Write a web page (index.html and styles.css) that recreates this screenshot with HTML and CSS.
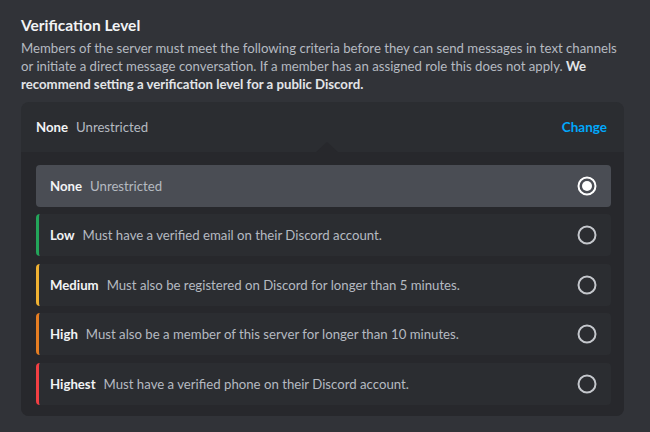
FILE: index.html
```html
<!DOCTYPE html>
<html lang="en">
<head>
<meta charset="utf-8">
<title>Verification Level</title>
<link rel="stylesheet" href="styles.css">
</head>
<body>
<main class="page">
  <h2 class="title">Verification Level</h2>
  <p class="desc">Members of the server must meet the following criteria before they can send messages in text channels or initiate a direct message conversation. If a member has an assigned role this does not apply. <strong>We</strong> <strong>recommend setting a verification level for a public Discord.</strong></p>
  <section class="card">
    <div class="card-head">
      <div class="level"><span class="name">None</span><span class="info">Unrestricted</span></div>
      <button class="change">Change</button>
    </div>
    <div class="list">
      <span class="caret"></span>
      <div class="opt selected">
        <div class="level"><span class="name">None</span><span class="info">Unrestricted</span></div>
        <svg class="radio" width="20" height="20" viewBox="0 0 20 20"><circle cx="10" cy="10" r="8.5" fill="none" stroke="#ffffff" stroke-width="2"/><circle cx="10" cy="10" r="5" fill="#ffffff"/></svg>
      </div>
      <div class="opt low">
        <div class="level"><span class="name">Low</span><span class="info">Must have a verified email on their Discord account.</span></div>
        <svg class="radio" width="20" height="20" viewBox="0 0 20 20"><circle cx="10" cy="10" r="8.5" fill="none" stroke="#c4c7cc" stroke-width="2"/></svg>
      </div>
      <div class="opt medium">
        <div class="level"><span class="name">Medium</span><span class="info">Must also be registered on Discord for longer than 5 minutes.</span></div>
        <svg class="radio" width="20" height="20" viewBox="0 0 20 20"><circle cx="10" cy="10" r="8.5" fill="none" stroke="#c4c7cc" stroke-width="2"/></svg>
      </div>
      <div class="opt high">
        <div class="level"><span class="name">High</span><span class="info">Must also be a member of this server for longer than 10 minutes.</span></div>
        <svg class="radio" width="20" height="20" viewBox="0 0 20 20"><circle cx="10" cy="10" r="8.5" fill="none" stroke="#c4c7cc" stroke-width="2"/></svg>
      </div>
      <div class="opt highest">
        <div class="level"><span class="name">Highest</span><span class="info">Must have a verified phone on their Discord account.</span></div>
        <svg class="radio" width="20" height="20" viewBox="0 0 20 20"><circle cx="10" cy="10" r="8.5" fill="none" stroke="#c4c7cc" stroke-width="2"/></svg>
      </div>
    </div>
  </section>
</main>
</body>
</html>
```

FILE: styles.css
```css
* { box-sizing: border-box; }
html, body { margin: 0; padding: 0; }
body {
  background: #313338;
  font-family: Lato, "Noto Sans", sans-serif;
  color: #b5bac1;
  width: 650px;
  height: 432px;
  overflow: hidden;
}
.page {
  padding: 15px 20px 0 21px;
}
.title {
  margin: 0;
  font-size: 15.5px;
  line-height: 20px;
  font-weight: 700;
  color: #f2f3f5;
}
.desc {
  margin: 4px 0 0;
  max-width: 601px;
  font-size: 13.2px;
  line-height: 18px;
  color: #b5bac1;
}
.desc strong { color: #e3e5e8; font-weight: 700; }
.card {
  margin-top: 8.5px;
  width: 603px;
  background: #2b2d31;
  border-radius: 8px;
  overflow: hidden;
}
.card-head {
  height: 50px;
  padding: 0 17px 0 15px;
  display: flex;
  align-items: center;
  justify-content: space-between;
}
.level { display: flex; align-items: baseline; gap: 8px; font-size: 13.2px; }
.name { font-weight: 700; color: #f2f3f5; }
.info { color: #b5bac1; }
.change {
  background: none;
  border: 0;
  padding: 0;
  font: 700 13.5px Lato, sans-serif;
  color: #00a8fc;
}
.list {
  position: relative;
  background: #27282c;
  padding: 13px 13px 11px 15px;
  display: flex;
  flex-direction: column;
  gap: 7.5px;
}
.caret {
  position: absolute;
  top: -10px;
  left: 295px;
  width: 0;
  height: 0;
  border-left: 11px solid transparent;
  border-right: 11px solid transparent;
  border-bottom: 10px solid #27282c;
}
.opt {
  height: 42px;
  background: #2b2d31;
  border-radius: 4px;
  display: flex;
  align-items: center;
  justify-content: space-between;
  padding: 0 14px 0 14px;
}
.opt.selected { background: #4a4d54; }
.opt.low { border-left: 3px solid #23a55a; padding-left: 11px; }
.opt.medium { border-left: 3px solid #f0b232; padding-left: 11px; }
.opt.high { border-left: 3px solid #e67e22; padding-left: 11px; }
.opt.highest { border-left: 3px solid #f23f43; padding-left: 11px; }
.radio { display: block; flex: none; }
```
